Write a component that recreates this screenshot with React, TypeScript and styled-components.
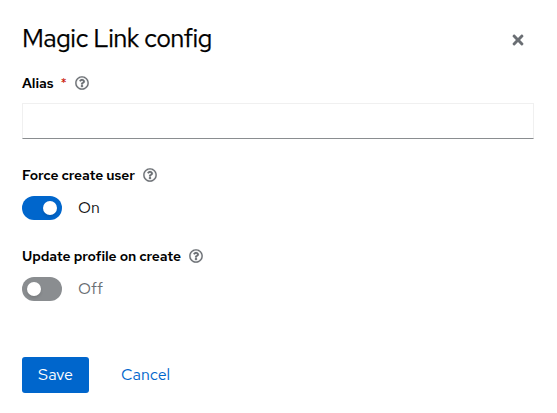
import React, { useState } from 'react';
import styled, { createGlobalStyle } from 'styled-components';
import { FaTimes, FaRegQuestionCircle } from 'react-icons/fa';

const GlobalStyle = createGlobalStyle`
  *, *::before, *::after { box-sizing: border-box; }
  body { margin: 0; background: #fff; }
  button, input { font: inherit; }
`;

const Dialog = styled.section`
  width: 557px;
  height: 413px;
  padding: 22px 23px 20px 22px;
  background: #fff;
  color: #151515;
  font-family: 'Red Hat Text', Inter, sans-serif;
  font-size: 16px;
`;

const Header = styled.header`
  display: flex;
  align-items: center;
  justify-content: space-between;
  height: 34px;
  padding-right: 8px;
`;

const Title = styled.h1`
  margin: -2px 0 0;
  color: #000;
  font-size: 25.5px;
  font-weight: 400;
  line-height: 34px;
  letter-spacing: -0.55px;
  -webkit-text-stroke: 0.25px #000;
  white-space: nowrap;
`;

const CloseButton = styled.button`
  display: flex;
  margin-top: 2px;
  padding: 0;
  border: 0;
  background: none;
  color: #6a6e73;
  font-size: 16px;
`;

const Field = styled.div<{ $gap: number }>`
  margin-top: ${({ $gap }) => $gap}px;
`;

const LabelRow = styled.div`
  display: flex;
  align-items: center;
  height: 20px;
`;

const Label = styled.label`
  color: #000;
  font-size: 14px;
  font-weight: 600;
  letter-spacing: -0.08px;
  line-height: 20px;
  white-space: nowrap;
`;

const Required = styled.span`
  margin-left: 7px;
  color: #c9190b;
  font-size: 14px;
  line-height: 20px;
  width: 7px;
`;

const HelpButton = styled.button`
  display: flex;
  margin-left: 8px;
  padding: 0;
  border: 0;
  background: none;
  color: #6a6e73;
  font-size: 14px;

  path {
    stroke: currentColor;
    stroke-width: 8px;
  }
`;

const TextInput = styled.input`
  display: block;
  width: 100%;
  height: 36px;
  margin-top: 10px;
  padding: 5px 8px;
  border: 1px solid #f0f0f0;
  border-bottom-color: #8a8d90;
  border-radius: 0;
  background: #fff;
  outline: none;
`;

const SwitchRow = styled.div`
  display: flex;
  align-items: center;
  height: 24px;
  margin-top: 11px;
`;

const Track = styled.button<{ $on: boolean }>`
  display: flex;
  align-items: center;
  justify-content: ${({ $on }) => ($on ? 'flex-end' : 'flex-start')};
  width: 40px;
  height: 24px;
  padding: 0 5px;
  border: 0;
  border-radius: 12px;
  background: ${({ $on }) => ($on ? '#06c' : '#8a8d90')};
`;

const Knob = styled.span`
  width: 14px;
  height: 14px;
  border-radius: 50%;
  background: #fff;
  box-shadow: 0 2px 3px rgba(3, 3, 3, 0.12);
`;

const SwitchText = styled.span<{ $on: boolean }>`
  margin-left: 16px;
  color: ${({ $on }) => ($on ? '#151515' : '#6a6e73')};
  font-weight: 400;
  line-height: 24px;
`;

const Actions = styled.footer`
  display: flex;
  margin-top: 56px;
`;

const Button = styled.button<{ $primary?: boolean }>`
  width: ${({ $primary }) => ($primary ? '67px' : '81px')};
  height: 36px;
  margin-left: ${({ $primary }) => ($primary ? '0' : '16px')};
  padding: 0;
  border: 0;
  border-radius: 3px;
  background: ${({ $primary }) => ($primary ? '#06c' : 'transparent')};
  color: ${({ $primary }) => ($primary ? '#fff' : '#06c')};
  font-weight: 400;
  line-height: 24px;
  text-align: center;
`;

function SwitchField({ label, initial }: { label: string; initial: boolean }) {
  const [on, setOn] = useState(initial);
  return (
    <Field $gap={26}>
      <LabelRow>
        <Label>{label}</Label>
        <HelpButton aria-label={`Help for ${label}`}><FaRegQuestionCircle /></HelpButton>
      </LabelRow>
      <SwitchRow>
        <Track $on={on} role="switch" aria-checked={on} aria-label={label} onClick={() => setOn(!on)}>
          <Knob />
        </Track>
        <SwitchText $on={on}>{on ? 'On' : 'Off'}</SwitchText>
      </SwitchRow>
    </Field>
  );
}

export default function App() {
  return (
    <>
      <GlobalStyle />
      <Dialog role="dialog" aria-labelledby="dialog-title">
        <Header>
          <Title id="dialog-title">Magic Link config</Title>
          <CloseButton aria-label="Close"><FaTimes /></CloseButton>
        </Header>
        <Field $gap={17}>
          <LabelRow>
            <Label htmlFor="alias">Alias</Label>
            <Required>*</Required>
            <HelpButton aria-label="Help for Alias"><FaRegQuestionCircle /></HelpButton>
          </LabelRow>
          <TextInput id="alias" required />
        </Field>
        <SwitchField label="Force create user" initial />
        <SwitchField label="Update profile on create" initial={false} />
        <Actions>
          <Button $primary>Save</Button>
          <Button>Cancel</Button>
        </Actions>
      </Dialog>
    </>
  );
}
